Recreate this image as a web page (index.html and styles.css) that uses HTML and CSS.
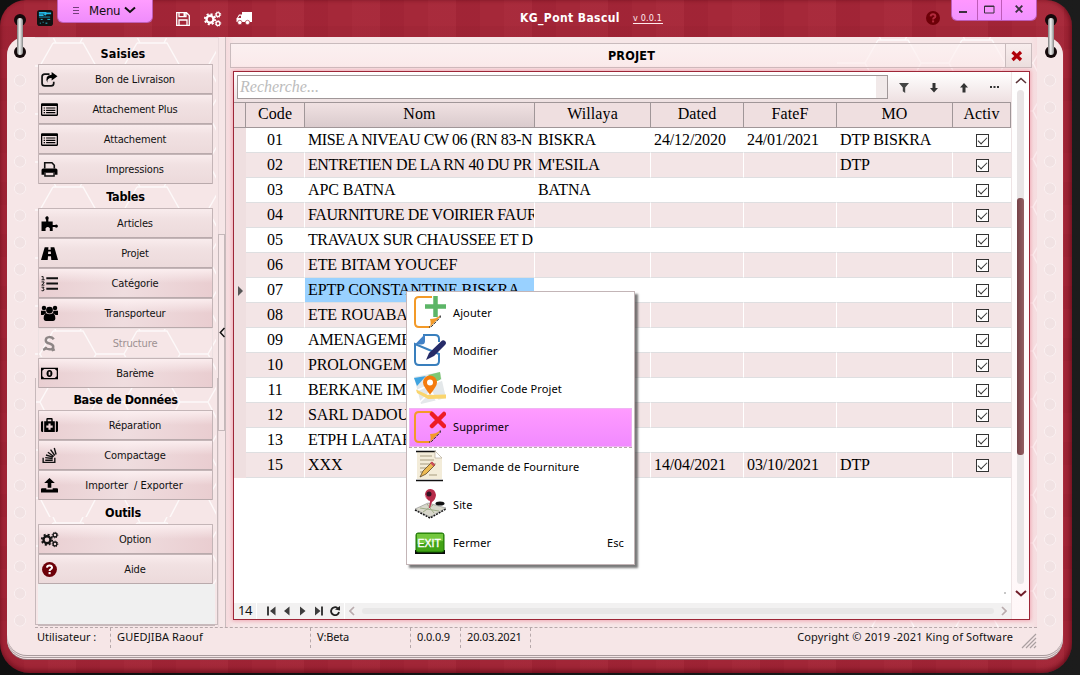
FILE: index.html
```html
<!DOCTYPE html>
<html lang="fr">
<head>
<meta charset="utf-8">
<title>KG_Pont Bascul</title>
<link rel="stylesheet" href="styles.css">
</head>
<body>
<svg width="0" height="0" class="defs">
  <defs>
    <pattern id="hex" width="84" height="48" patternUnits="userSpaceOnUse">
      <path d="M18 6H48L61 29 48 54M61 29H89M18 6L5 29 18 54M0 29H5M61 29L48 6M48 0L45 6M18 0L21 6" fill="none" stroke="#fff" stroke-opacity=".75" stroke-width="1.4"/>
    </pattern>
    <pattern id="hex2" href="#hex" patternTransform="translate(23 -3)"></pattern>
    <linearGradient id="ring" x1="0" x2="1"><stop offset="0" stop-color="#777"/><stop offset=".45" stop-color="#f4f4f4"/><stop offset="1" stop-color="#858585"/></linearGradient>
    <symbol id="gears" viewBox="0 0 18 16">
      <circle cx="6" cy="8.2" r="3.5" fill="none" stroke="currentColor" stroke-width="2.4"/>
      <circle cx="6" cy="8.2" r="5.2" fill="none" stroke="currentColor" stroke-width="1.8" stroke-dasharray="2.04 2.04"/>
      <circle cx="14" cy="3.6" r="1.9" fill="none" stroke="currentColor" stroke-width="1.3"/>
      <circle cx="14" cy="3.6" r="2.8" fill="none" stroke="currentColor" stroke-width="1" stroke-dasharray="1.1 1.1"/>
      <circle cx="14" cy="12.4" r="1.9" fill="none" stroke="currentColor" stroke-width="1.3"/>
      <circle cx="14" cy="12.4" r="2.8" fill="none" stroke="currentColor" stroke-width="1" stroke-dasharray="1.1 1.1"/>
    </symbol>
    <symbol id="help" viewBox="0 0 16 16">
      <circle cx="8" cy="8" r="7" fill="#6d0008"/>
      <path d="M5.6 6.3Q5.8 4.2 8 4.2T10.4 6.2Q10.4 7.3 9.1 7.9 8.1 8.4 8.1 9.4" fill="none" stroke="var(--q,#fff)" stroke-width="1.9"/><path d="M7.1 10.4h2v2h-2z" fill="var(--q,#fff)"/>
    </symbol>
    <symbol id="list" viewBox="0 0 16 16"><path d="M1 2h14q1 0 1 1v10q0 1-1 1h-14q-1 0-1-1V3q0-1 1-1ZM1.200 4.800v8h13.600v-8Z" fill-rule="evenodd"/><path d="M2.500 6h1.300v1.100H2.500zm2.300 0h8.700v1.100H4.800zM2.500 8.200h1.300v1.100H2.500zm2.300 0h8.700v1.100H4.800zM2.500 10.400h1.300v1.100H2.500zm2.300 0h8.700v1.100H4.800z"/></symbol>
    <symbol id="page" viewBox="0 0 32 32">
      <path d="M18 1H5Q1 1 1 5v22q0 4 4 4h11" fill="none" stroke="#f39a28" stroke-width="2"/>
      <path d="M15.500 31.500Q17.500 28 16 23q6 0 10-3.500V21Z" fill="#f39a28"/><path d="M26.300 19.500v1.800L17 31h-2" fill="none" stroke="#222" stroke-width="1" stroke-dasharray="3 1"/>
    </symbol>
  </defs>
</svg>
<div class="desk">
<div class="frame">
  <header class="top">
    <svg class="app-logo" width="16" height="16" viewBox="0 0 17 17"><rect width="17" height="17" rx="3" fill="#111"/><path d="M2 3h8M2 5.500h5M8 5.500l2-2h5" stroke="#22b8e6" stroke-width="1.800" fill="none"/><path d="M2 7.500h12" stroke="#1593ba"/><path d="M4 10h2M11 10h3M6 13h1M9 14h2M3 14h1" stroke="#2cc3dd"/></svg>
    <button class="menu-tab"><span class="burger"></span>Menu<svg width="12" height="8" viewBox="0 0 12 8"><path d="M1 1.500l5 4.500 5-4.500" fill="none" stroke="#111" stroke-width="2"/></svg></button>
    <div class="quick">
      <svg width="14" height="14" viewBox="0 0 14 14"><path d="M.7.700h9.800l2.800 2.800v9.800H.7ZM3 .700v4h7v-4M3 13V8h8v5" fill="none" stroke="#fff" stroke-width="1.300"/><path d="M7.500 1h2v3h-2z" fill="#fff"/></svg>
      <svg width="18" height="16"><use href="#gears"/></svg>
      <svg width="16" height="13" viewBox="0 0 16 13"><path d="M6 0h10v10H6zM1 6l2-3.500h3V10H.500V6Z" fill="#fff"/><path d="M2 6l1.500-2.300H5V6Z" fill="#a32638"/><circle cx="3.800" cy="10.500" r="2.200" fill="#fff" stroke="#a32638" stroke-width=".7"/><circle cx="11.500" cy="10.500" r="2.200" fill="#fff" stroke="#a32638" stroke-width=".7"/></svg>
    </div>
    <h1>KG_Pont Bascul</h1><a class="ver">v 0.0.1</a>
    <svg class="top-help" width="16" height="16"><use href="#help"/></svg>
    <div class="winbtns">
      <span><svg width="9" height="10"><path d="M0 8h8" stroke="#3c3040" stroke-width="2"/></svg></span>
      <span><svg width="11" height="9"><path d="M.5 1h9.500v7H.5zM.5 1.500h9.500" fill="none" stroke="#3c3040"/></svg></span>
      <span><svg width="8" height="8"><path d="M.7.700l6.600 6.600M7.300.700L.7 7.300" stroke="#3c3040" stroke-width="1.900"/></svg></span>
    </div>
  </header>
  <div class="paper">
    <div class="holes left"></div>
    <div class="middle">
      <svg class="hexbg side-hex" width="181" height="550"><rect width="181" height="550" fill="url(#hex)"/></svg>
      <svg class="hexbg main-hex" width="200" height="590"><rect width="200" height="590" fill="url(#hex2)"/></svg>
      <div class="workspace">
        <nav class="sidebar">
          <h2 class="first">Saisies</h2>
          <button><svg viewBox="0 0 16 16"><path d="M8 3H3.500Q1 3 1 5.500v6Q1 14 3.500 14h6Q12 14 12 11.500V10" fill="none" stroke="#111" stroke-width="1.600"/><path d="M10 1l5.500 4L10 9V6.700Q5.500 6.500 6 11 3 4.200 10 3.500Z"/></svg>Bon de Livraison</button>
          <button><svg><use href="#list"/></svg>Attachement Plus</button>
          <button><svg><use href="#list"/></svg>Attachement</button>
          <button><svg viewBox="0 0 16 16"><path d="M3.500 7V1.700h6.800L12.500 4v3" fill="none" stroke="#111" stroke-width="1.500"/><path d="M2 7h12q1.500 0 1.500 1.500V13H13v-2H3v2H.5V8.500Q.5 7 2 7Z"/><path d="M3.700 11v3.200h8.600V11" fill="none" stroke="#111" stroke-width="1.400"/></svg>Impressions</button>
          <h2>Tables</h2>
          <button><svg viewBox="0 0 16 16"><path d="M.5 6h4.300V4.500Q3.800 3.500 4.200 2.200 5 .8 6.200 1.200 7.800 2 6.900 4.300V6H11v3.500h2.200q1-1.200 2.300-.2.800 1.200 0 2.300-1.300 1-2.300-.2H11V15H8.300v-2.500q-2-2.500-4 0V15H.5Z"/></svg>Articles</button>
          <button><svg viewBox="0 0 16 16"><path d="M3.500 2H7l-.2 2.500h2.400L9 2h3.500L16 14H9.700l-.3-3.500H6.600L6.300 14H0ZM6.800 6l-.2 2.500h2.800L9.200 6Z" fill-rule="evenodd"/></svg>Projet</button>
          <button class="deep"><svg viewBox="0 0 16 16"><path d="M5 3h11M5 8h11M5 13h11" stroke="#111" stroke-width="1.800"/><path d="M.5 1.500H2v3M.5 4.500h3M.5 6.500h2.300v1L.7 9.500h2.500M.5 11.500h2.300l-1 1.300q1.500.2 1 1.500-.5 1-2.300.4" fill="none" stroke="#111" stroke-width=".9"/></svg>Catégorie</button>
          <button class="deep"><svg viewBox="0 0 16 16"><circle cx="2.800" cy="2.800" r="2.100"/><circle cx="13.200" cy="2.800" r="2.100"/><circle cx="8" cy="4.800" r="3.200"/><path d="M0 5.500h4.300l.4 2.200Q3 8.200 2.300 9.500H.5Q0 9.500 0 9ZM16 5.500h-4.300l-.4 2.200q1.700.5 2.400 1.800h1.800q.5 0 .5-.5ZM5 7.800q3 2 6 0 2.500.5 2.500 5.200 0 2-2 2h-7q-2 0-2-2Q2.500 8.300 5 7.800Z"/></svg>Transporteur</button>
          <button class="off"><svg viewBox="0 0 16 16"><path d="M12 4Q10.500 1.700 7.500 2T4.500 5 8 8q4 1.300 3.500 3.500T8 13.500 3.500 11.500M2 14l4-2M10 14.500l3-1" fill="none" stroke="#8d8585" stroke-width="2.300"/></svg>Structure</button>
          <button class="deep"><svg viewBox="0 0 16 16"><path d="M0 2.500h16v11H0ZM1.200 5.500v5l1.800 1.800h10l1.800-1.800v-5L13 3.700H3Z" fill-rule="evenodd"/><path d="M8 4.700c3.700 0 3.700 6.600 0 6.600s-3.700-6.600 0-6.600Zm-.8 1.600v3.400h1.600V6.300Z" fill-rule="evenodd"/></svg>Barème</button>
          <h2 class="short">Base de Données</h2>
          <button class="deep"><svg viewBox="0 0 16 16"><path d="M1 4h1v10H1Q0 14 0 13V5q0-1 1-1ZM14 4h1q1 0 1 1v8q0 1-1 1h-1ZM3 4h2V2q0-1 1-1h4q1 0 1 1v2h2v10H3ZM6.300 2.300V4h3.400V2.300ZM7 6v2H5v2h2v2h2v-2h2V8H9V6Z" fill-rule="evenodd"/></svg>Réparation</button>
          <button class="deep"><svg viewBox="0 0 16 16"><path d="M2 10v4.500h11V10M4 12.500h7M4 10l7 .8M4.700 7.500l6.500 2M6.500 5l5.500 4M9 2.500l4 5.500M12.500 1l1.700 6" fill="none" stroke="#111" stroke-width="1.300"/></svg>Compactage</button>
          <button class="deep"><svg viewBox="0 0 16 16"><path d="M8 1l5 4.700H9.700V10H6.300V5.700H3ZM1 10.500h4v1.300h6v-1.300h4q1 0 1 1v3H0v-3q0-1 1-1Z"/></svg><span class="imp">Importer &nbsp;/ Exporter</span></button>
          <h2 class="first2">Outils</h2>
          <button class="deep"><svg class="gear"><use href="#gears"/></svg>Option</button>
          <button><svg><use href="#help"/></svg>Aide</button>
          <div class="rest"></div>
        </nav>
        <div class="splitter"><div class="handle"><svg width="6" height="11"><path d="M5.500 1L1.300 5.500l4.200 4.500" fill="none" stroke="#111" stroke-width="1.500"/></svg></div></div>
        <main class="main">
          <div class="caption"><span>PROJET</span><button><svg width="12" height="12"><path d="M1.500 2l8.500 8M10 2L1.500 10" stroke="#b00009" stroke-width="3.300"/></svg></button></div>
          <section class="grid">
            <div class="grid-left">
              <div class="search"><div class="input">Recherche...</div>
                <i><svg width="10" height="10"><path d="M0 0h10L6.200 4.500V10L3.800 8.200V4.500Z" fill="#444"/></svg></i>
                <i><svg width="8" height="10"><path d="M2.500 0h3v5H8L4 9.500 0 5h2.500Z" fill="#333"/></svg></i>
                <i><svg width="8" height="10"><path d="M2.500 9.500h3v-5H8L4 0 0 4.500h2.500Z" fill="#333"/></svg></i>
                <i><svg width="9" height="3"><path d="M0 0h2v2H0zm3.500 0h2v2h-2zM7 0h2v2H7z" fill="#333"/></svg></i>
              </div>
              <table>
                <colgroup><col class="c0"><col class="c1"><col class="c2"><col class="c3"><col class="c4"><col class="c4"><col class="c3"><col class="c5"></colgroup>
                <thead><tr><th></th><th>Code</th><th class="sorted">Nom</th><th>Willaya</th><th>Dated</th><th>FateF</th><th>MO</th><th>Activ</th></tr></thead>
                <tbody>
                <tr><td></td><td>01</td><td class="long">MISE A NIVEAU CW 06 (RN 83-N</td><td>BISKRA</td><td>24/12/2020</td><td>24/01/2021</td><td>DTP BISKRA</td><td><b></b></td></tr>
                <tr><td></td><td>02</td><td class="long">ENTRETIEN DE LA RN 40 DU PR</td><td>M'ESILA</td><td></td><td></td><td>DTP</td><td><b></b></td></tr>
                <tr><td></td><td>03</td><td>APC BATNA</td><td>BATNA</td><td></td><td></td><td></td><td><b></b></td></tr>
                <tr><td></td><td>04</td><td class="long">FAURNITURE DE VOIRIER FAUR</td><td></td><td></td><td></td><td></td><td><b></b></td></tr>
                <tr><td></td><td>05</td><td class="long">TRAVAUX SUR CHAUSSEE ET D</td><td></td><td></td><td></td><td></td><td><b></b></td></tr>
                <tr><td></td><td>06</td><td>ETE BITAM YOUCEF</td><td></td><td></td><td></td><td></td><td><b></b></td></tr>
                <tr><td class="cur"></td><td>07</td><td class="sel">EPTP CONSTANTINE BISKRA</td><td></td><td></td><td></td><td></td><td><b></b></td></tr>
                <tr><td></td><td>08</td><td>ETE ROUABAH</td><td></td><td></td><td></td><td></td><td><b></b></td></tr>
                <tr><td></td><td>09</td><td>AMENAGEMENT</td><td></td><td></td><td></td><td></td><td><b></b></td></tr>
                <tr><td></td><td>10</td><td>PROLONGEMENT</td><td></td><td></td><td></td><td></td><td><b></b></td></tr>
                <tr><td></td><td>11</td><td>BERKANE IMAD</td><td></td><td></td><td></td><td></td><td><b></b></td></tr>
                <tr><td></td><td>12</td><td>SARL DADOU</td><td></td><td></td><td></td><td></td><td><b></b></td></tr>
                <tr><td></td><td>13</td><td>ETPH LAATAR</td><td></td><td></td><td></td><td></td><td><b></b></td></tr>
                <tr><td></td><td>15</td><td>XXX</td><td></td><td>14/04/2021</td><td>03/10/2021</td><td>DTP</td><td><b></b></td></tr>
                </tbody>
              </table>
              <div class="blank"><em></em></div>
              <div class="navrow"><span class="count">14</span>
                <span class="navicons">
                  <svg width="74" height="12" viewBox="0 0 74 12"><path d="M0 1.500h2v9H0zM8.500 1.500v9L3 6ZM22.500 1.500v9L17 6ZM33 1.500v9L38.500 6ZM48 1.500v9L53.500 6ZM54 1.500h2v9h-2z" fill="#3d3d3d"/><path d="M70.500 3A4 4 0 1 0 72 7" fill="none" stroke="#222" stroke-width="1.800"/><path d="M68 4.500l5-3.500v4.500Z" fill="#222"/></svg>
                </span>
                <span class="hscroll"><svg width="6" height="10"><path d="M5 1L1 5l4 4" fill="none" stroke="#b9abad" stroke-width="1.700"/></svg><u></u><svg width="6" height="10"><path d="M1 1l4 4-4 4" fill="none" stroke="#b9abad" stroke-width="1.700"/></svg></span>
              </div>
            </div>
            <div class="vscroll">
              <svg width="12" height="7"><path d="M1 6l5-4.500L11 6" fill="none" stroke="#5b3338" stroke-width="1.600"/></svg>
              <div class="track"><div class="thumb"></div></div>
              <svg width="12" height="7"><path d="M1 1l5 4.500L11 1" fill="none" stroke="#701d29" stroke-width="2"/></svg>
            </div>
          </section>
        </main>
      </div>
      <footer class="status"><span class="s1">Utilisateur :</span><span class="s2">GUEDJIBA Raouf</span><span class="s3">V:Beta</span><span class="s4">0.0.0.9</span><span class="s5">20.03.2021</span><span class="s6">Copyright © 2019 -2021 King of Software</span>
        <svg class="grip" width="16" height="16"><path d="M1 15L15 1M5 15L15 5M9 15l6-6M13 15l2-2" stroke="#aaa0a1" stroke-width="1.200"/></svg></footer>
    </div>
    <div class="holes right"></div>
  </div>
  <svg class="ring ring-l" width="16" height="48"><circle cx="8" cy="8" r="6" fill="#15090b"/><circle cx="8" cy="40" r="6" fill="#15090b"/><rect x="5" y="6" width="6" height="37" rx="3" fill="url(#ring)"/></svg>
  <svg class="ring ring-r" width="16" height="48"><circle cx="8" cy="8" r="6" fill="#15090b"/><circle cx="8" cy="40" r="6" fill="#15090b"/><rect x="5" y="6" width="6" height="37" rx="3" fill="url(#ring)"/></svg>
</div>
</div>
<div class="popup">
  <div class="item"><svg viewBox="0 0 32 32"><use href="#page"/><path d="M21.500 0v21M11 10.500h21" stroke="#5cb567" stroke-width="4.500"/></svg>Ajouter</div>
  <div class="item"><svg viewBox="0 0 32 32"><path d="M9 1h12q4 0 4 4v3M25 20v7q0 4-4 4H5q-4 0-4-4V10Z" fill="none" stroke="#397fbd" stroke-width="2"/><path d="M1 10.500L10 1h1v6q0 3.500-3.500 3.500Z" fill="#4181c6"/><path d="M12 26l3-7L27 7.500q2-2 4-.5 2 2 0 4L20 22Z" fill="#262b68"/></svg>Modifier</div>
  <div class="item"><svg viewBox="0 0 32 32"><path d="M0 5L26 0l6 26-25 6Z" fill="#e4e8ea"/><path d="M0 6l12-2L3 14Z" fill="#3fa4e0"/><path d="M14 3l12-3 1 7-5 4Z" fill="#7dc873"/><path d="M4 18l24-10M6 30l10-10 8 8M14 14l10 17" stroke="#fff" stroke-width="1.500" fill="none"/><path d="M2 17.500L14 23l18-.5v4L14 27 3 21Z" fill="#fad56d"/><path d="M16 22.500Q9 14 9 10.500a7 7 0 0 1 14 0Q23 14 16 22.500Z" fill="#f47b0e"/><circle cx="16" cy="10.500" r="3" fill="#fff"/></svg>Modifier Code Projet</div>
  <div class="item hot"><svg viewBox="0 0 32 32"><use href="#page"/><path d="M18 3l12 12M30 3L18 15" stroke="#ed1c24" stroke-width="4.500" stroke-linecap="round"/></svg>Supprimer</div>
  <div class="item next"><svg viewBox="0 0 32 32"><path d="M3 2h19l6 6v21H3Z" fill="#f3ecd9"/><path d="M2 1.500h20M2 30.500h27" stroke="#111" stroke-width="1.500"/><path d="M21 1l7 7h-7Z" fill="#fff" stroke="#b7ad98" stroke-width=".7"/><path d="M6 6h12M6 10h14M6 14h16M6 18h10M6 22h8M15 25h8" stroke="#a89b80" stroke-width="1.200"/><path d="M6 27l3-6 9-9 3 3-9 9Z" fill="#edbb54" stroke="#5c4627" stroke-width=".8"/><path d="M16 13l2-1.500 3 3-1.500 2Z" fill="#cb4f5c"/></svg>Demande de Fourniture</div>
  <div class="item"><svg viewBox="0 0 32 32"><path d="M1 21l13-6 18 5-16 9Z" fill="#d8d7cb" stroke="#777" stroke-width=".5"/><path d="M1 22l15 8 16-9" stroke="#161616" stroke-width="1.500" fill="none" stroke-dasharray="2 1"/><path d="M6 20l19 3M13 16l7 9M9 24l10-7" stroke="#9fac88"/><ellipse cx="26" cy="15.500" rx="4.500" ry="2" fill="#111"/><path d="M15 20l1-7q-5-2-5-7 1-5 5.500-5T22 7q-.5 5-4 7l-2 6Z" fill="#b62c4a"/><circle cx="15" cy="6" r="2.500" fill="#321323"/><path d="M11 7Q12 11 15 13" fill="none" stroke="#e79aa9" stroke-width=".8"/></svg>Site</div>
  <div class="item"><svg viewBox="0 0 32 32"><path d="M1 24h30v4H1z" fill="#090909"/><rect x="2" y="7" width="28" height="19" rx="2" fill="#42a315" stroke="#197003"/><path d="M3 8h26v7q-13 1-26 3Z" fill="#74c83e"/><text x="3.500" y="21" class="exit">EXIT</text></svg>Fermer<span class="key">Esc</span></div>
</div>
</body>
</html>
```
FILE: styles.css
```css
* { box-sizing: border-box; }
body { margin: 0; width: 1080px; height: 679px; overflow: hidden; background: #fff; position: relative; font: 11px "DejaVu Sans Condensed", "DejaVu Sans", sans-serif; color: #111; }
button { font: inherit; color: inherit; padding: 0; margin: 0; }
svg { flex: none; }
.defs { position: absolute; }
.desk { height: 675px; background: linear-gradient(90deg, #101010, #1c1c1c); }
.frame {
  position: relative; width: 1072px; height: 673px; border-radius: 26px 26px 30px 30px;
  background:
    repeating-linear-gradient(90deg, rgba(120,0,25,.09) 0 24px, transparent 24px 48px, rgba(255,120,140,.04) 48px 76px),
    repeating-linear-gradient(0deg, rgba(100,0,20,.06) 0 23px, transparent 23px 52px), #a52839;
  box-shadow: inset 0 -3px 5px rgba(80,0,15,.45), inset -2px 0 4px rgba(80,0,15,.4);
}
.top { height: 37px; display: flex; align-items: flex-start; }
.app-logo { margin: 10px 0 0 37px; }
.menu-tab { width: 96px; height: 23px; margin-left: 4px; border: 1px solid #c05fb8; border-top: 0; border-radius: 0 0 6px 6px; background: linear-gradient(#ff9dff, #ef8cfb); display: flex; align-items: center; padding: 0 0 2px 15px; font-size: 13px; letter-spacing: -.2px; }
.burger { width: 6px; height: 7px; margin-right: 10px; border-top: 1px solid #743f7b; border-bottom: 1px solid #743f7b; background: linear-gradient(#743f7b, #743f7b) 0 2px / 6px 1px no-repeat; }
.menu-tab svg { margin-left: 4px; }
.quick { display: flex; align-items: center; height: 37px; margin-left: 23px; color: #fff; }
.quick svg + svg { margin-left: 14px; }
.top h1 { margin: 11px 0 0 268px; width: 101px; white-space: nowrap; font-size: 12px; line-height: 15px; letter-spacing: .4px; color: #fff; }
.ver { margin: 13px 0 0 12px; width: 30px; white-space: nowrap; font-size: 9px; line-height: 10px; color: #ffe9ec; letter-spacing: .15px; border-bottom: 1px solid #ffe9ec; }
.top-help { margin: 10px 0 0 262px; --q: #b42b3f; }
.winbtns { display: flex; width: 86px; height: 21px; margin-left: 10px; border: 1px solid #bd5bb7; border-top: 0; border-radius: 0 0 6px 6px; background: linear-gradient(#ff97ff, #f193ff); overflow: hidden; }
.winbtns span { width: 25px; display: flex; align-items: center; justify-content: center; padding-bottom: 2px; padding-right: 2px; }
.winbtns span + span { border-left: 1px solid #bd5bb7; padding-right: 0; }
.winbtns span:last-child { width: 35px; }
.paper { margin-left: 7px; width: 1056px; height: 618px; display: flex; background: #f6e6e7; border-radius: 18px 18px 20px 20px; box-shadow: 0 1px #a99b9d, 0 2px #f2e4e5, 0 3px #a99b9d, 0 4px #f2e4e5, 0 5px #8e6b70; }
.holes { width: 28px; background: radial-gradient(circle at 13px 13.5px, #f1e2e3 0 4.800px, #faf0f1 5.600px, transparent 6.300px) 0 0 / 28px 27px repeat-y; margin-top: 30px; height: 567px; }
.holes.right { width: 26px; }
.middle { width: 1002px; position: relative; }
.hexbg { position: absolute; top: 0; }
.side-hex { left: 0; }
.main-hex { right: 0; }
.workspace { position: relative; height: 590px; display: flex; }
.sidebar { width: 183px; padding: 5px 5px 1px 3px; display: flex; flex-direction: column; border-top: 1px solid #e4d3d5; }
.sidebar h2 { margin: 0; height: 24px; line-height: 25px; text-align: center; font-size: 12.500px; letter-spacing: -.25px; color: #000; }
.sidebar h2.first { height: 21px; line-height: 21px; padding-right: 5px; letter-spacing: .05px; }
.sidebar h2.short { height: 22px; line-height: 24px; letter-spacing: -.32px; }
.sidebar h2.first2 { padding-right: 5px; }
.sidebar button { height: 30px; width: 175px; flex: none; display: grid; grid-template-columns: 17px 154px; align-items: center; text-align: center; border: 1px solid #c4b5b7; border-bottom-color: #b9aaac; border-radius: 1px; background: linear-gradient(#f9eced, #f1e1e2 35%, #ecdadb); padding-left: 2px; letter-spacing: -.14px; }
.sidebar button.deep { background: linear-gradient(rgba(255,244,245,.8), rgba(255,244,245,0) 50%), linear-gradient(100deg, #e9ced1, #efdddf 50%, #e9cdd0); }
.sidebar button.off { background: transparent; border-color: #ece0e1; color: #9d9192; }
.sidebar button > svg { width: 17px; height: 17px; color: #111; }
.sidebar button > svg.gear { width: 18px; }
.imp { letter-spacing: -.05px; padding-right: 2px; }
.rest { flex: 1; background: #f0f0f0; border-bottom: 1px solid #c7b9bb; margin: 0 -2px 0 0; position: relative; }
.rest::before { content: ""; position: absolute; left: -3px; right: -3px; bottom: 0; height: 246px; border: solid #c7b9bb; border-width: 0 1px 1px; }
.splitter { width: 8px; padding-top: 197px; border-left: 1px solid #eadadc; border-right: 1px solid #c9bbbd; }
.handle { height: 197px; width: 7px; margin-left: -1px; border: 1px solid #c5b8ba; background: #f8e9ea; display: flex; align-items: center; }
.main { width: 811px; padding: 6px 6px 7px 4px; background: linear-gradient(90deg, rgba(244,190,198,.3), transparent 8px 803px, rgba(244,190,198,.25)); }
.caption { height: 25px; width: 802px; display: flex; border: 1px solid #c9bbbd; background: linear-gradient(rgba(253,244,244,.7), rgba(252,235,236,.7)); font-weight: bold; font-size: 12.500px; color: #000; }
.caption span { flex: 1; line-height: 23px; text-align: center; padding-left: 27px; letter-spacing: .2px; }
.caption button { width: 26px; border: 0; border-left: 1px solid #c9bbbd; background: linear-gradient(#f8eded, #ecdede); display: flex; align-items: center; justify-content: center; padding-right: 3px; }
.grid { width: 797px; height: 549px; margin: 3px 0 0 3px; display: flex; border: 1px solid #9d2637; background: #fff; box-shadow: 0 0 4px 1px #efa5b0; }
.grid-left { width: 778px; display: flex; flex-direction: column; border-right: 1px solid #eee3e4; }
.search { height: 30px; flex: none; display: flex; background: linear-gradient(#fff, #eee0e1); padding: 3px 0 0 3px; }
.input { width: 651px; height: 24px; border: 1px solid #a09798; background: linear-gradient(90deg, #fff 638px, #f1e9e9 638px); padding-left: 2px; font: italic 16px/21px "Liberation Serif", serif; color: #bcbcbc; letter-spacing: 0; margin-right: 1px; }
.search i { width: 30px; height: 25px; display: flex; align-items: center; justify-content: center; }
table { width: 777px; table-layout: fixed; border-collapse: separate; border-spacing: 0; font: 16px/24px "Liberation Serif", serif; letter-spacing: -.11px; color: #000; flex: none; }
.c0 { width: 12px; } .c1 { width: 59px; } .c2 { width: 230px; } .c3 { width: 116px; } .c4 { width: 93px; } .c5 { width: 58px; }
th { padding: 0 0 2px; height: 26px; line-height: 22px; font-weight: normal; letter-spacing: .1px; background: #efdfe0; border: solid #a09698; border-width: 1px 1px 1px 0; }
th.sorted { background: linear-gradient(#f0e1e2, #dacbcd); }
td { height: 25px; padding: 0 0 0 3px; overflow: hidden; white-space: nowrap; border-right: 1px solid #fff; border-bottom: 1px solid #dedfe1; }
tbody tr:nth-child(even) { background: #f3e5e6; }
td:first-child { background: #efdfe0; border: 0; padding: 0; }
td:nth-child(2) { text-align: center; padding: 0; }
td:last-child { padding: 0; border-right: 0; }
td.long { letter-spacing: -.4px; }
td.sel { background: #99d1ff; }
td b { display: block; width: 13px; height: 13px; margin: 1px auto 0; border: 1px solid #333; background: #fff; position: relative; }
td b::after { content: ""; position: absolute; left: 1.500px; top: 2px; width: 8px; height: 4px; border: solid #333; border-width: 0 0 1.300px 1.300px; transform: rotate(-45deg); }
td.cur::before { content: ""; display: block; margin-left: 4px; width: 0; border: solid transparent; border-width: 5px 0 5px 5px; border-left-color: #555; }
.blank { flex: 1; position: relative; }
.blank em { position: absolute; right: 5px; bottom: 9px; width: 2px; height: 2px; background: #c8c8c8; }
.navrow { height: 16px; flex: none; display: flex; background: #f2f1f1; }
.count { width: 23px; border-right: 1px solid #fff; padding-left: 4px; font: 13px/15px "Noto Sans", sans-serif; letter-spacing: -.4px; }
.navicons { width: 88px; padding: 2px 0 0 10px; border-right: 1px solid #fff; }
.hscroll { flex: 1; display: flex; align-items: center; padding: 0 4px; }
.hscroll u { flex: 1; height: 6px; margin: 0 7px; border-radius: 3px; background: #e8e7e7; }
.vscroll { width: 17px; padding: 5px 0 22px; display: flex; flex-direction: column; align-items: center; background: linear-gradient(#fff, #fff7f8); }
.track { width: 7px; margin: 6px 0; flex: 1; border-radius: 4px; background: #e8e4e5; padding-top: 108px; }
.thumb { height: 257px; border-radius: 3px; background: linear-gradient(90deg, #764247, #945f63); }
.status { position: relative; height: 28px; border-top: 1px dashed #b6a8aa; display: flex; font: 11px/18px "Noto Sans", sans-serif; color: #111; letter-spacing: -.15px; }
.status span { height: 20px; white-space: nowrap; border-right: 1px dashed #b6a8aa; }
.s1 { width: 76px; padding-left: 2px; letter-spacing: 0; }
.s2 { width: 200px; padding-left: 6px; letter-spacing: .12px; }
.s3 { width: 100px; padding-left: 6px; }
.s4 { width: 50px; padding-left: 6px; }
.s5 { width: 70px; padding-left: 6px; }
.status .s6 { flex: 1; text-align: right; border: 0; padding-right: 8px; letter-spacing: .14px; }
.grip { margin: 5px 0 0; }
.ring { position: absolute; top: 12px; }
.ring-l { left: 12px; }
.ring-r { left: 1043px; }
.popup { position: absolute; left: 406px; top: 291px; width: 229px; height: 274px; padding: 2px; background: #fff; border: 1px solid #c3b5b7; box-shadow: 3px 3px 2px rgba(50,50,50,.65); font: 11px "Noto Sans", sans-serif; letter-spacing: .12px; color: #000; }
.item { height: 38px; display: flex; align-items: center; padding: 0 0 2px 5px; }
.item svg { width: 32px; height: 32px; margin-right: 7px; }
.item.hot { background: linear-gradient(#ff9bff, #f18aff); border: 1px solid #efb5f3; padding-left: 4px; height: 39px; }
.item.next { border-top: 1px dashed #b9a9ab; height: 39px; }
.key { margin-left: auto; padding-right: 8px; }
.exit { font: 10.500px "Liberation Sans", sans-serif; fill: #fff; stroke: #fff; stroke-width: .35px; letter-spacing: 0; }
```
